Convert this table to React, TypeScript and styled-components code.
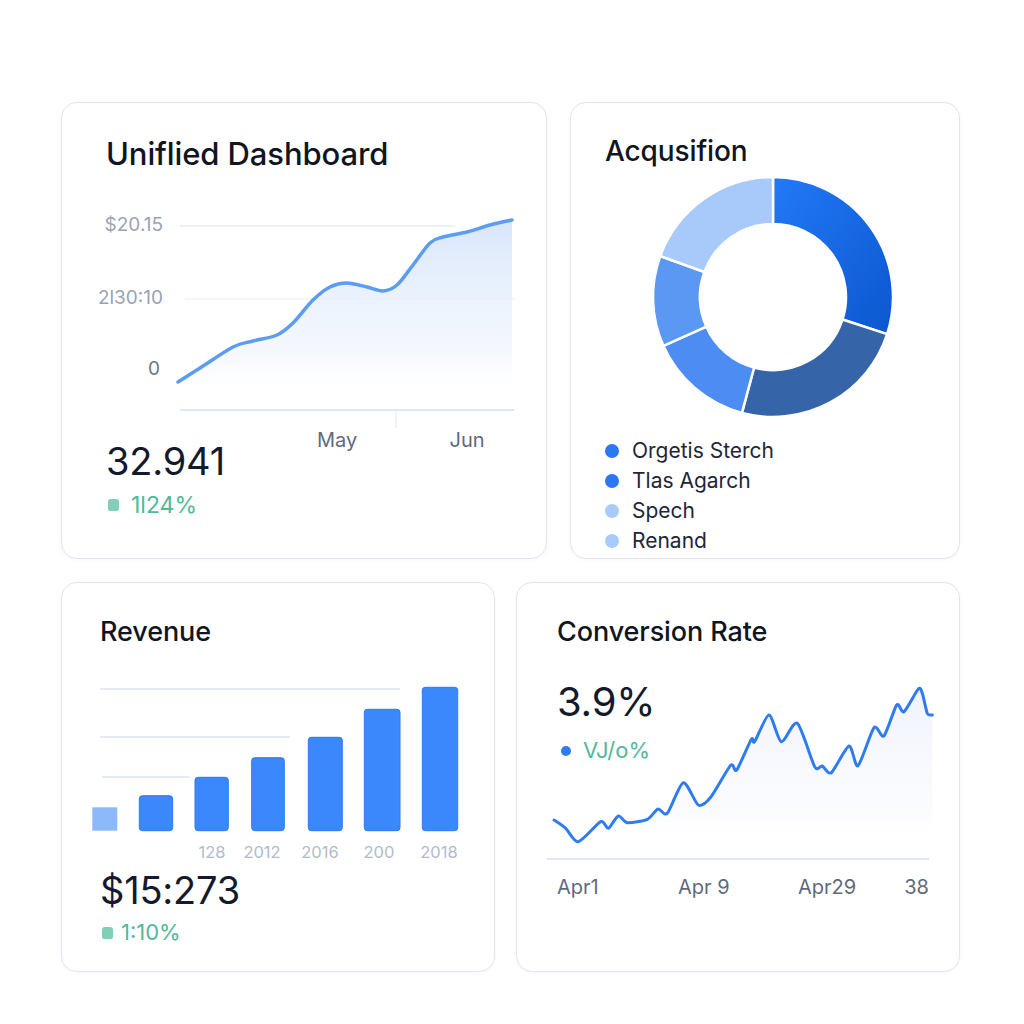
import styled, { createGlobalStyle } from "styled-components";

const Global = createGlobalStyle`
  html, body {
    margin: 0;
    padding: 0;
    background: #ffffff;
  }
  body {
    font-family: "Inter", "Noto Sans", "Liberation Sans", sans-serif;
    color: #141a2b;
  }
`;

type Pt = [number, number];

// catmull-rom through the points, as cubic beziers
const smooth = (pts: Pt[], k = 6) => {
  let d = `M${pts[0][0]},${pts[0][1]}`;
  for (let i = 0; i < pts.length - 1; i++) {
    const p0 = pts[i - 1] || pts[i];
    const p1 = pts[i];
    const p2 = pts[i + 1];
    const p3 = pts[i + 2] || p2;
    const c1x = p1[0] + (p2[0] - p0[0]) / k;
    const c1y = p1[1] + (p2[1] - p0[1]) / k;
    const c2x = p2[0] - (p3[0] - p1[0]) / k;
    const c2y = p2[1] - (p3[1] - p1[1]) / k;
    d += ` C${c1x.toFixed(1)},${c1y.toFixed(1)} ${c2x.toFixed(1)},${c2y.toFixed(1)} ${p2[0]},${p2[1]}`;
  }
  return d;
};

const arc = (cx: number, cy: number, R: number, r: number, a0: number, a1: number) => {
  const p = (rad: number, a: number): Pt => [
    cx + rad * Math.sin((a * Math.PI) / 180),
    cy - rad * Math.cos((a * Math.PI) / 180),
  ];
  const large = a1 - a0 > 180 ? 1 : 0;
  const [x0, y0] = p(R, a0);
  const [x1, y1] = p(R, a1);
  const [x2, y2] = p(r, a1);
  const [x3, y3] = p(r, a0);
  return `M${x0},${y0} A${R},${R} 0 ${large} 1 ${x1},${y1} L${x2},${y2} A${r},${r} 0 ${large} 0 ${x3},${y3} Z`;
};

const Page = styled.div`
  padding: 102px 0 60px 61px;
`;

const Row = styled.div<{ $cols: string; $h: number; $gap: number; $top?: number }>`
  display: grid;
  grid-template-columns: ${(p) => p.$cols};
  column-gap: ${(p) => p.$gap}px;
  height: ${(p) => p.$h}px;
  margin-top: ${(p) => p.$top || 0}px;
`;

const Card = styled.div<{ $pad: string }>`
  box-sizing: border-box;
  background: #fff;
  border: 1px solid #e3e5ee;
  border-radius: 16px;
  box-shadow: 0 1px 4px rgba(30, 40, 80, 0.04);
  padding: ${(p) => p.$pad};
  display: flex;
  flex-direction: column;
  overflow: hidden;
`;

const Title = styled.h2<{ $size: number }>`
  margin: 0;
  font-size: ${(p) => p.$size}px;
  line-height: ${(p) => Math.round(p.$size * 1.17)}px;
  font-weight: 500;
  color: #111522;
  letter-spacing: -0.1px;
  white-space: nowrap;
`;

const Chart = styled.svg<{ $top: number }>`
  display: block;
  overflow: visible;
  margin-top: ${(p) => p.$top}px;
  flex-shrink: 0;
`;

const Footer = styled.div`
  display: flex;
  justify-content: space-between;
  align-items: flex-start;
`;

const ValueBlock = styled.div<{ $top: number }>`
  margin-top: ${(p) => p.$top}px;
`;

const Value = styled.div<{ $size?: number }>`
  font-size: ${(p) => p.$size || 38}px;
  line-height: 44px;
  font-weight: 400;
  color: #141a2b;
  letter-spacing: -0.2px;
`;

const Delta = styled.div<{ $top: number; $size: number; $gap: number }>`
  display: flex;
  align-items: center;
  gap: ${(p) => p.$gap}px;
  margin-top: ${(p) => p.$top}px;
  font-size: ${(p) => p.$size}px;
  line-height: ${(p) => p.$size + 5}px;
  color: #4fb99c;
`;

const Chip = styled.span`
  width: 11px;
  height: 12px;
  border-radius: 3px 3px 2px 2px;
  background: #7fcfba;
  margin-left: 2px;
`;

const Dot = styled.span<{ $color: string; $size: number; $left?: number }>`
  width: ${(p) => p.$size}px;
  height: ${(p) => p.$size}px;
  border-radius: 50%;
  background: ${(p) => p.$color};
  margin-left: ${(p) => p.$left || 0}px;
  flex-shrink: 0;
`;

const AxisLabels = styled.div`
  display: flex;
  gap: 50px;
  padding-right: 7px;
`;

const AxisLabel = styled.span`
  width: 80px;
  text-align: center;
  font-size: 20px;
  line-height: 24px;
  color: #5f6a80;
`;

const DonutWrap = styled.div`
  margin-top: 7px;
  padding-left: 46px;
`;

const Legend = styled.ul`
  list-style: none;
  margin: 13px 0 0;
  padding: 0;
`;

const LegendItem = styled.li`
  display: flex;
  align-items: center;
  gap: 13px;
  font-size: 21px;
  line-height: 30px;
  color: #1f2636;
`;

const Stack = styled.div`
  display: grid;
  margin-top: 32px;
  & > * {
    grid-area: 1 / 1;
  }
`;

const StackValue = styled.div`
  align-self: start;
  justify-self: start;
  position: relative;
  z-index: 1;
`;

const dashPts: Pt[] = [
  [72, 182], [94, 168], [127, 147], [147, 141], [171, 135], [187, 123],
  [207, 100], [224, 87], [241, 83], [261, 87], [277, 91], [291, 85],
  [307, 65], [324, 43], [337, 37], [361, 32], [384, 25], [406, 20],
];

const convPts: Pt[] = [
  [-3, 140], [8.7, 148.3], [21.3, 161.7], [43.7, 141.7], [51.3, 148.3], [61.3, 136],
  [70.3, 142.7], [90.3, 139.3], [101, 129], [110.3, 133.3], [126.3, 102.7], [141.3, 125],
  [153.7, 117.3], [173.7, 85.3], [179.7, 90], [194.3, 59.3], [197.7, 61.7], [212, 35],
  [224.3, 61.7], [240.3, 43.3], [257.7, 86.7], [265.3, 86], [274.3, 92.7], [292, 66],
  [301, 85.7], [317, 47.7], [327, 56], [339.7, 25], [347, 31.7], [361.3, 9],
  [365.3, 13.3], [370.3, 33.3], [375.3, 35],
];

const bars = [
  { x: -7.7, w: 25, top: 147.3, light: true },
  { x: 39.3, w: 33.4, top: 135.7 },
  { x: 95, w: 33.3, top: 117.3 },
  { x: 151.7, w: 32.6, top: 97.7 },
  { x: 208.3, w: 34, top: 77.3 },
  { x: 264.3, w: 35.7, top: 49.3 },
  { x: 322.3, w: 35.4, top: 27.3 },
];

const years = [
  { x: 112, t: "128" },
  { x: 162, t: "2012" },
  { x: 220, t: "2016" },
  { x: 279, t: "200" },
  { x: 339, t: "2018" },
];

const segments = [
  { a0: 0, a1: 108, fill: "url(#bright)" },
  { a0: 108, a1: 195, fill: "#3564a9" },
  { a0: 195, a1: 246, fill: "#4d8df3" },
  { a0: 246, a1: 290, fill: "#5b98f3" },
  { a0: 290, a1: 360, fill: "#a7cafb" },
];

const legend = [
  { c: "#2b78f2", t: "Orgetis Sterch" },
  { c: "#2b78f2", t: "Tlas Agarch" },
  { c: "#a9cbfb", t: "Spech" },
  { c: "#a9cbfb", t: "Renand" },
];

function DashboardCard() {
  const line = smooth(dashPts);
  return (
    <Card $pad="33px 32px 0 44px">
      <Title $size={31}>Uniflied Dashboard</Title>
      <Chart $top={28} width="408" height="228" viewBox="0 0 408 228">
        <defs>
          <linearGradient id="dashFill" x1="0" y1="0" x2="0" y2="1">
            <stop offset="0" stopColor="#d6e5fb" stopOpacity="0.95" />
            <stop offset="0.75" stopColor="#eef4fd" stopOpacity="0.6" />
            <stop offset="1" stopColor="#ffffff" stopOpacity="0" />
          </linearGradient>
        </defs>
        <line x1="74" y1="26" x2="349" y2="26" stroke="#e3ecfa" strokeWidth="1.5" />
        <line x1="79" y1="99" x2="409" y2="99" stroke="#edf2fb" strokeWidth="1.5" />
        <path d={`${line} L406,200 L72,200 Z`} fill="url(#dashFill)" />
        <path d={line} fill="none" stroke="#5c9cf1" strokeWidth="3.5" strokeLinecap="round" />
        <line x1="74" y1="210" x2="408" y2="210" stroke="#bcd3f6" strokeWidth="1.2" />
        <line x1="290" y1="210" x2="290" y2="228" stroke="#e6ebf3" strokeWidth="1.2" />
        <g fontSize="19" fill="#9ba3b6" textAnchor="end" fontFamily="Inter, sans-serif">
          <text x="57" y="31">$20.15</text>
          <text x="57" y="104">2l30:10</text>
          <text x="54" y="175" fill="#6b7489">0</text>
        </g>
      </Chart>
      <Footer>
        <ValueBlock $top={11}>
          <Value>32.941</Value>
          <Delta $top={8} $size={23} $gap={12}>
            <Chip />
            <span>1l24%</span>
          </Delta>
        </ValueBlock>
        <AxisLabels>
          <AxisLabel>May</AxisLabel>
          <AxisLabel>Jun</AxisLabel>
        </AxisLabels>
      </Footer>
    </Card>
  );
}

function AcquisitionCard() {
  return (
    <Card $pad="32px 20px 0 34px">
      <Title $size={28}>Acqusifion</Title>
      <DonutWrap>
        <svg width="244" height="244" viewBox="0 0 244 244">
          <defs>
            <linearGradient id="bright" x1="0" y1="0" x2="1" y2="1">
              <stop offset="0" stopColor="#2379f6" />
              <stop offset="1" stopColor="#0b57cf" />
            </linearGradient>
          </defs>
          {segments.map((s) => (
            <path
              key={s.a0}
              d={arc(122, 122, 120, 73, s.a0, s.a1)}
              fill={s.fill}
              stroke="#ffffff"
              strokeWidth="2.5"
              strokeLinejoin="round"
            />
          ))}
        </svg>
      </DonutWrap>
      <Legend>
        {legend.map((l) => (
          <LegendItem key={l.t}>
            <Dot $color={l.c} $size={14} />
            {l.t}
          </LegendItem>
        ))}
      </Legend>
    </Card>
  );
}

function RevenueCard() {
  return (
    <Card $pad="33px 36px 0 38px">
      <Title $size={27}>Revenue</Title>
      <Chart $top={12} width="358" height="204" viewBox="0 0 358 204">
        <g stroke="#dfe5f1" strokeWidth="1.5">
          <line x1="0" y1="29" x2="300" y2="29" />
          <line x1="0" y1="77" x2="190" y2="77" />
          <line x1="2" y1="117" x2="90" y2="117" />
        </g>
        {bars.map((b) => (
          <rect
            key={b.x}
            x={b.x}
            y={b.top}
            width={b.w}
            height={170.7 - b.top}
            rx={b.light ? 0 : 3}
            fill={b.light ? "#8bb9fa" : "#3a88fb"}
            stroke={b.light ? "none" : "#2c7af0"}
            strokeWidth="1"
          />
        ))}
        <g fontSize="16.5" fill="#b3bacb" textAnchor="middle" fontFamily="Inter, sans-serif">
          {years.map((y) => (
            <text key={y.t} x={y.x} y="198">
              {y.t}
            </text>
          ))}
        </g>
      </Chart>
      <ValueBlock $top={4}>
        <Value>$15:273</Value>
        <Delta $top={7} $size={22} $gap={8}>
          <Chip />
          <span>1:10%</span>
        </Delta>
      </ValueBlock>
    </Card>
  );
}

function ConversionCard() {
  const line = smooth(convPts, 8);
  return (
    <Card $pad="33px 26px 0 40px">
      <Title $size={27}>Conversion Rate</Title>
      <Stack>
        <Chart $top={0} width="376" height="222" viewBox="0 0 376 222">
          <defs>
            <linearGradient id="convFill" x1="0" y1="0" x2="0" y2="1">
              <stop offset="0" stopColor="#eef2fc" stopOpacity="0.9" />
              <stop offset="0.8" stopColor="#f6f8fd" stopOpacity="0.5" />
              <stop offset="1" stopColor="#ffffff" stopOpacity="0" />
            </linearGradient>
          </defs>
          <path d={`${line} L375.3,160 L-3,160 Z`} fill="url(#convFill)" />
          <path
            d={line}
            fill="none"
            stroke="#2f7cf1"
            strokeWidth="3"
            strokeLinejoin="round"
            strokeLinecap="round"
          />
          <line x1="-10" y1="179" x2="372" y2="179" stroke="#bcd3f4" strokeWidth="1.2" />
          <g fontSize="20" fill="#5f6a80" fontFamily="Inter, sans-serif">
            <text x="0" y="214">Apr1</text>
            <text x="121" y="214">Apr 9</text>
            <text x="241" y="214">Apr29</text>
            <text x="372" y="214" textAnchor="end">38</text>
          </g>
        </Chart>
        <StackValue>
          <Value $size={40}>3.9%</Value>
          <Delta $top={13} $size={22} $gap={12}>
            <Dot $color="#2f7cf1" $size={10} $left={4} />
            <span>VJ/o%</span>
          </Delta>
        </StackValue>
      </Stack>
    </Card>
  );
}

export default function App() {
  return (
    <>
      <Global />
      <Page>
        <Row $cols="486px 390px" $gap={23} $h={457}>
          <DashboardCard />
          <AcquisitionCard />
        </Row>
        <Row $cols="434px 444px" $gap={21} $h={390} $top={23}>
          <RevenueCard />
          <ConversionCard />
        </Row>
      </Page>
    </>
  );
}
